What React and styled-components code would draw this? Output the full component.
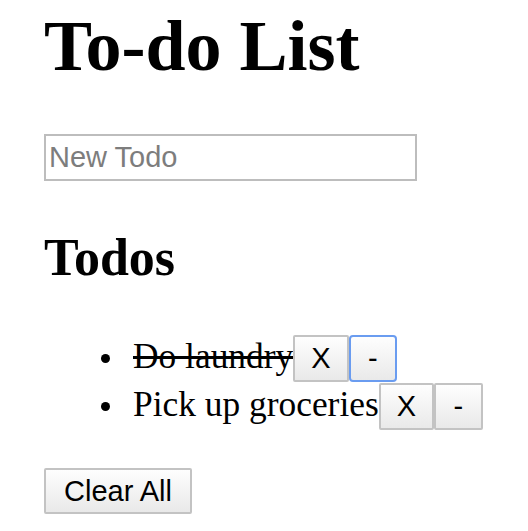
import React from "react";
import styled, { createGlobalStyle } from "styled-components";

const GlobalStyle = createGlobalStyle`
  html, body { margin: 0; padding: 0; background: #ffffff; }
  body { font-family: "Liberation Serif", "Times New Roman", serif; color: #000; }
`;

const Page = styled.div`
  display: flex;
  flex-direction: column;
  align-items: flex-start;
  padding: 6px 0 0 44px;
`;

const Title = styled.h1`
  margin: 0;
  font-family: "Liberation Serif", serif;
  font-weight: bold;
  font-size: 72px;
  line-height: 80px;
`;

const NewInput = styled.input`
  box-sizing: border-box;
  margin-top: 48px;
  width: 373px;
  height: 47px;
  border: 2px solid #bdbdbd;
  padding: 0 3px;
  font-family: "Liberation Sans", Arial, sans-serif;
  font-size: 29px;
  color: #000;
  outline: none;
  &::placeholder { color: #7d7d7d; }
`;

const SubTitle = styled.h2`
  margin: 47px 0 0;
  font-family: "Liberation Serif", serif;
  font-weight: bold;
  font-size: 52px;
  line-height: 60px;
`;

const List = styled.ul`
  margin: 47px 0 0;
  padding-left: 89px;
  font-size: 35.4px;
  line-height: normal;
  list-style: none;
`;

const Item = styled.li`
  position: relative;
  margin-bottom: 1px;
  &::before {
    content: "";
    position: absolute;
    left: -32px;
    top: 19px;
    width: 9px;
    height: 9px;
    border-radius: 50%;
    background: #000;
  }
`;

const ItemText = styled.span`
  text-decoration: ${(p) => (p.$done ? "line-through" : "none")};
`;

const Button = styled.button`
  box-sizing: border-box;
  height: 47px;
  padding: 0 ${(p) => p.$pad || 16}px;
  margin: 0;
  font-family: "Liberation Sans", Arial, sans-serif;
  font-size: 29px;
  color: #000;
  background: linear-gradient(#fefefe, #e9e9e9);
  border: 2px solid ${(p) => (p.$focused ? "#6a9cf0" : "#c3c3c3")};
  border-radius: ${(p) => (p.$focused ? 4 : 2)}px;
  vertical-align: baseline;
  cursor: pointer;
`;

const ClearButton = styled(Button)`
  margin-top: 37px;
  height: 46px;
`;

const todos = [
  { text: "Do laundry", done: true, focused: true },
  { text: "Pick up groceries", done: false, focused: false },
];

export default function App() {
  return (
    <>
      <GlobalStyle />
      <Page>
        <Title>To-do List</Title>
        <NewInput placeholder="New Todo" />
        <SubTitle>Todos</SubTitle>
        <List>
          {todos.map((t) => (
            <Item key={t.text}>
              <ItemText $done={t.done}>{t.text}</ItemText>
              <Button>X</Button>
              <Button $focused={t.focused} $pad={17.5}>-</Button>
            </Item>
          ))}
        </List>
        <ClearButton $pad={18}>Clear All</ClearButton>
      </Page>
    </>
  );
}
